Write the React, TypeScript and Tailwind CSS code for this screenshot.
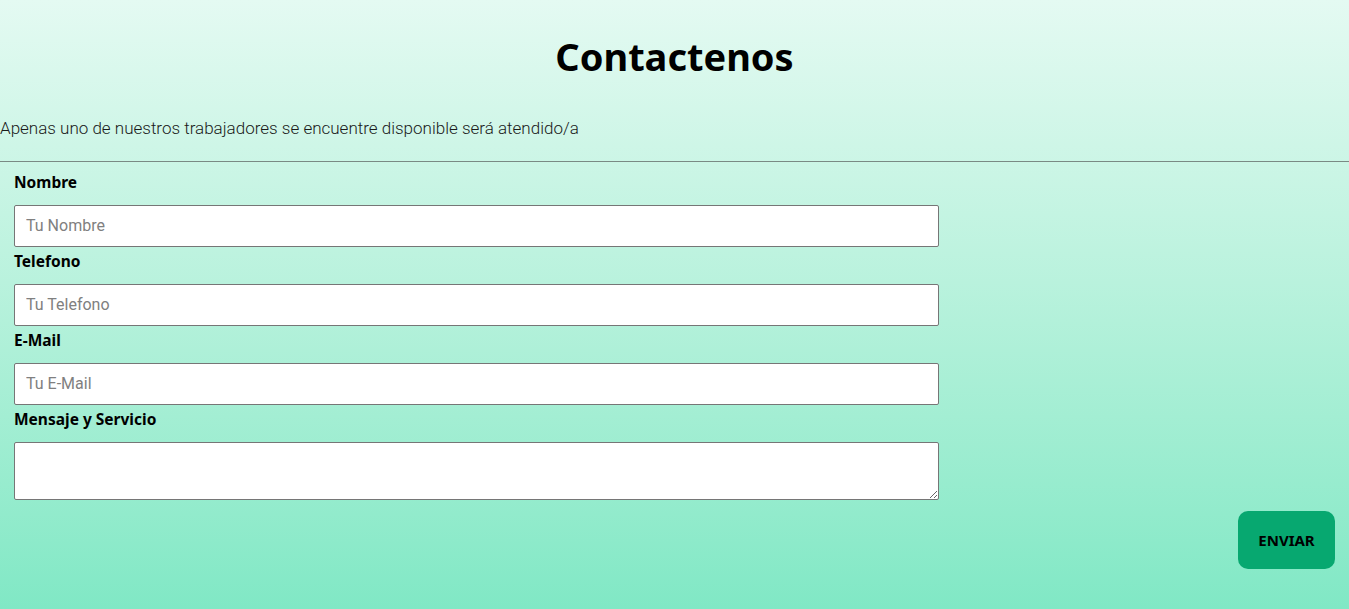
export default function App() {
  const fields = [
    { label: "Nombre", placeholder: "Tu Nombre" },
    { label: "Telefono", placeholder: "Tu Telefono" },
    { label: "E-Mail", placeholder: "Tu E-Mail" },
  ];

  return (
    <div className="min-h-[609px] bg-gradient-to-b from-[#e4faf2] to-[#80e8c5] font-['Noto_Sans',sans-serif] text-black">
      <h1 className="pt-[29px] text-center text-[38px] font-bold leading-[54px]">
        Contactenos
      </h1>
      <p className="mt-[33px] font-['Roboto',sans-serif] text-[17px] font-light leading-[24px] text-[#1a1a1a]">
        Apenas uno de nuestros trabajadores se encuentre disponible será atendido/a
      </p>
      <hr className="mt-[21px] border-t border-[#7a8a84]" />
      <form className="px-[14px] pt-[6px]">
        {fields.map((f) => (
          <div key={f.label}>
            <label className="block pt-[2px] pb-[11px] text-[15.5px] font-bold leading-[24px]">
              {f.label}
            </label>
            <input
              type="text"
              placeholder={f.placeholder}
              className="block h-[42px] w-[925px] border border-[#767676] bg-white px-[11px] pb-[1px] font-['Roboto',sans-serif] text-[16px] placeholder:text-[#808080] rounded-[2px]"
            />
          </div>
        ))}
        <label className="block pt-[2px] pb-[11px] text-[15.5px] font-bold leading-[24px]">
          Mensaje y Servicio
        </label>
        <textarea className="block h-[58px] w-[925px] border border-[#767676] bg-white rounded-[2px]" />
        <div className="mt-[11px] flex justify-end">
          <button
            type="submit"
            className="h-[58px] w-[97px] rounded-[10px] bg-[#07a870] text-[15px] font-bold"
          >
            ENVIAR
          </button>
        </div>
      </form>
    </div>
  );
}
